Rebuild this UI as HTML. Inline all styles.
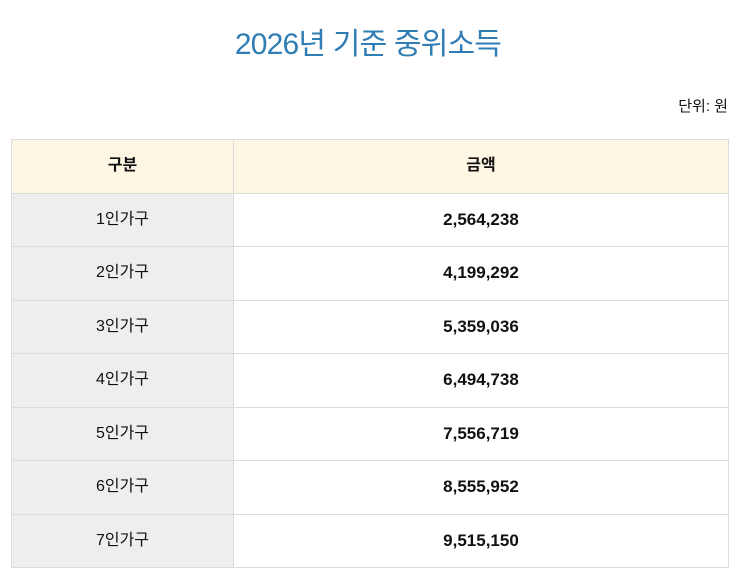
<!DOCTYPE html>
<html><head><meta charset="utf-8"><style>
body{margin:0;background:#fff;font-family:"Liberation Sans","Noto Sans CJK KR",sans-serif;color:#111;}
h1{position:absolute;top:25px;left:0;width:736px;margin:0;text-align:center;font-weight:normal;font-size:30px;color:#2f7db3;line-height:40px;letter-spacing:-0.8px}
.unit{position:absolute;top:96px;right:8px;font-size:15px;line-height:22px}
table{position:absolute;top:139px;left:11px;width:718px;border-collapse:collapse;font-size:16px}
td,th{border:1px solid #dcdcdc;text-align:center;height:52.5px;padding:0}
td div,th div{display:flex;align-items:center;justify-content:center;height:52px;line-height:20px}
th{background:#fcf6e3;font-weight:bold}
td.c{background:#eeeeee;width:221px}
td.v{font-weight:bold;font-size:17px}
</style></head><body>
<h1>2026년 기준 중위소득</h1>
<div class="unit">단위: 원</div>
<table>
<tr><th style="width:221px"><div>구분</div></th><th><div>금액</div></th></tr>
<tr><td class="c"><div>1인가구</div></td><td class="v"><div>2,564,238</div></td></tr>
<tr><td class="c"><div>2인가구</div></td><td class="v"><div>4,199,292</div></td></tr>
<tr><td class="c"><div>3인가구</div></td><td class="v"><div>5,359,036</div></td></tr>
<tr><td class="c"><div>4인가구</div></td><td class="v"><div>6,494,738</div></td></tr>
<tr><td class="c"><div>5인가구</div></td><td class="v"><div>7,556,719</div></td></tr>
<tr><td class="c"><div>6인가구</div></td><td class="v"><div>8,555,952</div></td></tr>
<tr><td class="c"><div>7인가구</div></td><td class="v"><div>9,515,150</div></td></tr>
</table>
</body></html>
